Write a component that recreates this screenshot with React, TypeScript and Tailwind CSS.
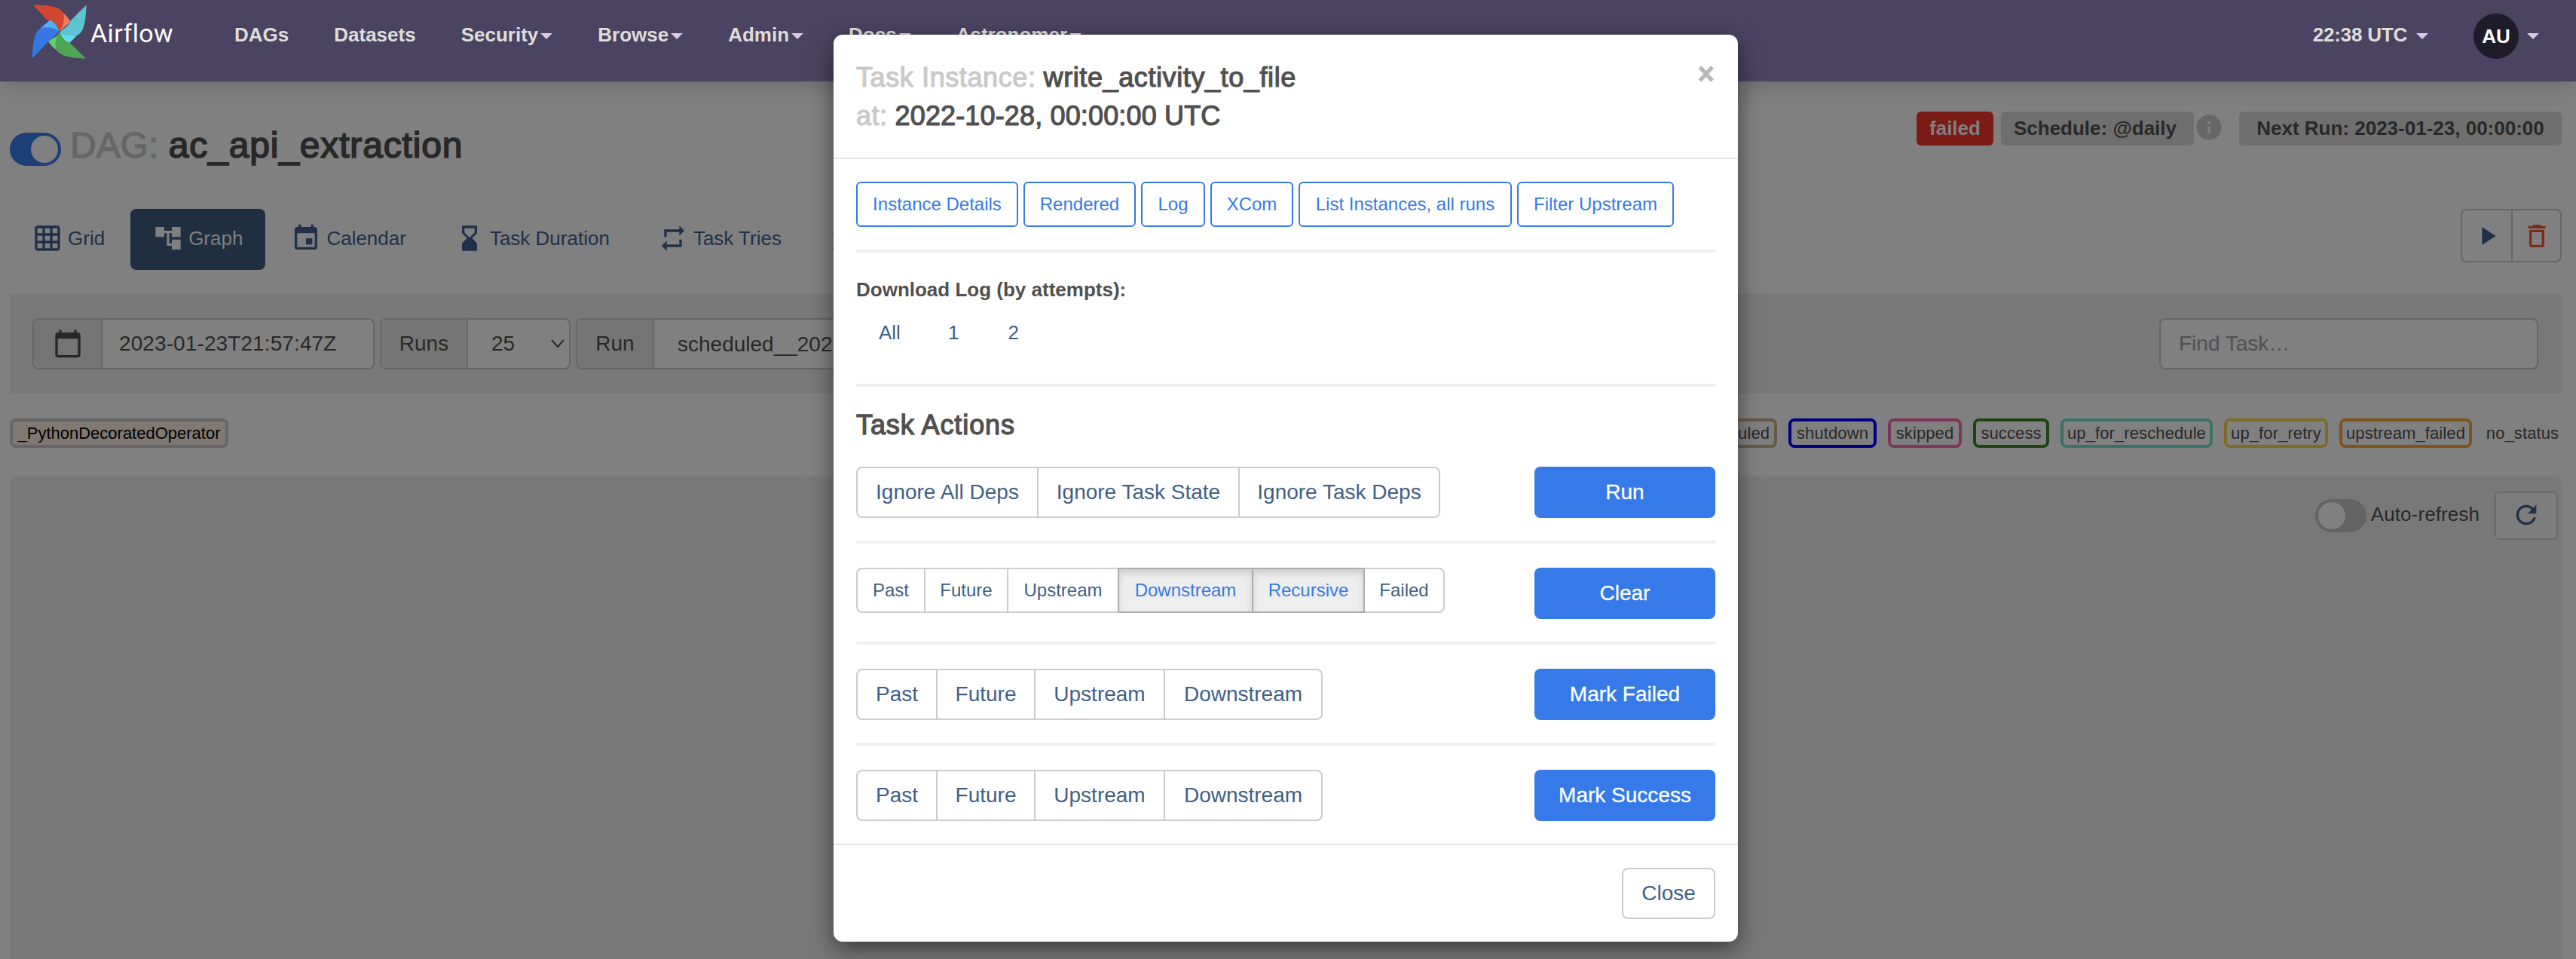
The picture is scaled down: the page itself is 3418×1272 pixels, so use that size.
import React from "react";
import {
  MdGridOn,
  MdAccountTree,
  MdEvent,
  MdHourglassBottom,
  MdRepeat,
  MdFlightLand,
  MdCalendarToday,
  MdPlayArrow,
  MdDeleteOutline,
  MdRefresh,
  MdInfo,
} from "react-icons/md";

function Pinwheel() {
  return (
    <svg className="h-[72px] w-[72px]" viewBox="43 6 72 72">
      <path d="M43 77.500C43 55 46 42 54 37.500C62 35 74 37 79 42L64 55Z" fill="#3578e5" />
      <path d="M66 27L53.500 37.500C62 35 74 37 79 42C76 35 72 27 66 27Z" fill="#4fb0fb" />
      <path d="M44 6.500C66 7 78 8 84 17.500C86 28 83 35 79 42C76 34 72 28 66 27C62 27 62 26 60 24Z" fill="#d2482f" />
      <path d="M84 17.500C88 20 91 25 94 28.500L79 42C83 35 86 28 84 17.500Z" fill="#ef7a5b" />
      <path d="M114.500 6.500C114 29 111 44 102.500 46.500C94 48 84 46 79 42C86 38 92 33 94 27Z" fill="#5bc4d0" />
      <path d="M79 42C84 46 94 48 102.500 46.500C99 50 96 54 92 57C85 55 81 48 79 42Z" fill="#62dcea" />
      <path d="M114 77.500C92 77 80 74 75 66.500C72 58 75 48 79 42C82 50 87 56 93 57Z" fill="#4fa652" />
      <path d="M79 42C75 48 72 58 75 66.500C70 63 67 59 64 55C70 50 77 49 79 42Z" fill="#5fd06a" />
      <circle cx="79" cy="42" r="1.300" fill="#4a4362" />
    </svg>
  );
}

function Caret({ className = "" }: { className?: string }) {
  return (
    <span
      className={`mt-[4px] inline-block border-x-[8px] border-t-[8px] border-x-transparent border-t-[#dccbdf] ${className}`}
    />
  );
}

function NavItem({ label, caret }: { label: string; caret?: boolean }) {
  return (
    <div className="flex items-center px-[30px]">
      <span>{label}</span>
      {caret && <Caret className="ml-[3px]" />}
    </div>
  );
}

function Tab({
  icon: Icon,
  label,
  active,
}: {
  icon: React.ComponentType<{ className?: string }>;
  label: string;
  active?: boolean;
}) {
  return (
    <div
      className={`flex h-[81px] items-center rounded-[8px] px-[30px] pb-[3px] ${
        active ? "bg-[#202e42] text-[#808080]" : "text-[#20304a]"
      }`}
    >
      <Icon className="mr-[7px] size-[40px]" />
      <span>{label}</span>
    </div>
  );
}

const states = [
  { label: "scheduled", style: "w-[121px] border-[#695a46]" },
  { label: "shutdown", style: "w-[117px] border-[#000080]" },
  { label: "skipped", style: "w-[98px] border-[#80355a]" },
  { label: "success", style: "w-[101px] border-[#1c4310]" },
  { label: "up_for_reschedule", style: "w-[202px] border-[#3b7169]" },
  { label: "up_for_retry", style: "w-[138px] border-[#7c6a25]" },
  { label: "upstream_failed", style: "w-[176px] border-[#805318]" },
  { label: "no_status", style: "w-[104px] border-transparent" },
];

function State({ label, style }: { label: string; style: string }) {
  return (
    <div
      className={`flex h-[39px] items-center justify-center rounded-[8px] border-4 text-[22px] tracking-[0.100px] whitespace-nowrap text-[#282828] ${style}`}
    >
      {label}
    </div>
  );
}

const links = [
  { label: "Instance Details", width: "w-[215px]" },
  { label: "Rendered", width: "w-[149px]" },
  { label: "Log", width: "w-[85px]" },
  { label: "XCom", width: "w-[110px]" },
  { label: "List Instances, all runs", width: "w-[283px]" },
  { label: "Filter Upstream", width: "w-[208px]" },
];

type Option = { label: string; width: string; on?: boolean };

function Options({ items, small }: { items: Option[]; small?: boolean }) {
  return (
    <div className={small ? "flex h-[60px] text-[24px]" : "flex h-[68px] text-[28px]"}>
      {items.map((o) => (
        <div
          key={o.label}
          className={`-ml-[2px] flex items-center justify-center border-2 whitespace-nowrap first:ml-0 first:rounded-l-[8px] last:rounded-r-[8px] ${o.width} ${
            o.on
              ? "relative z-10 border-[#adadad] bg-[#eeeeee] text-[#357ae8] shadow-[inset_0_6px_10px_rgba(0,0,0,0.125)]"
              : "border-[#cccccc] text-[#3f5f86]"
          }`}
        >
          {o.label}
        </div>
      ))}
    </div>
  );
}

function ActionRow({ items, action, small }: { items: Option[]; action: string; small?: boolean }) {
  return (
    <div className="flex h-[68px] items-start justify-between">
      <Options items={items} small={small} />
      <div className="flex h-[68px] w-[240px] items-center justify-center rounded-[8px] bg-[#357ae8] text-[28px] text-white [-webkit-text-stroke:0.3px]">
        {action}
      </div>
    </div>
  );
}

function Rule({ className = "" }: { className?: string }) {
  return <div className={`h-[4px] bg-[#f0f0f0] ${className}`} />;
}

const runOptions: Option[] = [
  { label: "Ignore All Deps", width: "w-[242px]" },
  { label: "Ignore Task State", width: "w-[269px]" },
  { label: "Ignore Task Deps", width: "w-[268px]" },
];

const clearOptions: Option[] = [
  { label: "Past", width: "w-[92px]" },
  { label: "Future", width: "w-[112px]" },
  { label: "Upstream", width: "w-[149px]" },
  { label: "Downstream", width: "w-[180px]", on: true },
  { label: "Recursive", width: "w-[150px]", on: true },
  { label: "Failed", width: "w-[108px]" },
];

const markOptions: Option[] = [
  { label: "Past", width: "w-[108px]" },
  { label: "Future", width: "w-[132px]" },
  { label: "Upstream", width: "w-[174px]" },
  { label: "Downstream", width: "w-[211px]" },
];

function TaskModal() {
  return (
    <div className="flex h-[1203px] w-[1200px] flex-col rounded-[12px] bg-white text-[#51504f] shadow-[0_10px_30px_rgba(0,0,0,0.5)]">
      <div className="flex h-[165px] justify-between border-b-2 border-[#e5e5e5] pt-[31px] pr-[30px] pl-[30px]">
        <div className="text-[36px] leading-[51px] [-webkit-text-stroke:1.2px]">
          <div>
            <span className="tracking-[0.600px] text-[#c9c9c9]">Task Instance:</span>{" "}
            <span className="tracking-[0.600px]">write_activity_to_file</span>
          </div>
          <div>
            <span className="tracking-[0.500px] text-[#c9c9c9]">at:</span>{" "}
            <span className="tracking-[0.150px]">2022-10-28, 00:00:00 UTC</span>
          </div>
        </div>
        <svg className="mt-[10px] h-[22px] w-[24px]" viewBox="0 0 24 22">
          <path d="M3.500 2L20 20M20 2L3.500 20" stroke="#b8b8b8" strokeWidth="5.500" />
        </svg>
      </div>

      <div className="flex flex-col px-[30px] pt-[30px]">
        <div className="flex gap-[7px] text-[24px] text-[#357ae8]">
          {links.map((l) => (
            <div
              key={l.label}
              className={`flex h-[60px] items-center justify-center rounded-[6px] border-2 border-[#357ae8] whitespace-nowrap ${l.width}`}
            >
              {l.label}
            </div>
          ))}
        </div>
        <Rule className="mt-[30px]" />
        <div className="mt-[31px] text-[26px] leading-[36px] font-bold">Download Log (by attempts):</div>
        <div className="mt-[21px] flex h-[36px] items-center text-[26px] text-[#3f5f86]">
          <span className="pl-[30px]">All</span>
          <span className="pl-[63px]">1</span>
          <span className="pl-[65px]">2</span>
        </div>
        <Rule className="mt-[50px]" />
        <div className="mt-[25px] h-[51px] text-[36px] leading-[51px] tracking-[0.900px] [-webkit-text-stroke:1.3px]">
          Task Actions
        </div>
        <div className="mt-[30px]">
          <ActionRow items={runOptions} action="Run" />
          <Rule className="mt-[30px] mb-[32px]" />
          <ActionRow items={clearOptions} action="Clear" small />
          <Rule className="mt-[30px] mb-[32px]" />
          <ActionRow items={markOptions} action="Mark Failed" />
          <Rule className="mt-[30px] mb-[32px]" />
          <ActionRow items={markOptions} action="Mark Success" />
        </div>
      </div>

      <div className="mt-[30px] flex justify-end border-t-2 border-[#e5e5e5] px-[30px] pt-[30px]">
        <div className="flex h-[68px] w-[124px] items-center justify-center rounded-[8px] border-2 border-[#cccccc] text-[28px] text-[#3f5f86]">
          Close
        </div>
      </div>
    </div>
  );
}

export default function App() {
  return (
    <div className="relative h-[1272px] w-full overflow-hidden bg-[#808080] font-['Liberation_Sans',Arial,sans-serif] text-[26px] text-[#282828]">
      <nav className="relative flex h-[108px] items-start justify-between bg-[#4a4362] pr-[49px] pl-[43px] shadow-[0_12px_24px_-4px_rgba(0,0,0,0.14)]">
        <div className="flex h-[92px] items-center font-bold text-[#dfddda]">
          <div className="mb-[9px] flex w-[238px] items-center gap-[5px]">
            <Pinwheel />
            <span className="mt-[5px] font-[Roboto] text-[34px] font-normal tracking-[0.400px] text-white">Airflow</span>
          </div>
          <NavItem label="DAGs" />
          <NavItem label="Datasets" />
          <NavItem label="Security" caret />
          <NavItem label="Browse" caret />
          <NavItem label="Admin" caret />
          <NavItem label="Docs" caret />
          <NavItem label="Astronomer" caret />
        </div>
        <div className="flex h-[92px] items-center font-bold text-[#dfddda]">
          <span className="tracking-[-0.200px]">22:38 UTC</span>
          <Caret className="ml-[12px]" />
          <div className="mt-[4px] ml-[60px] flex size-[60px] items-center justify-center rounded-full bg-[#1f1c2a] text-[26px] text-white">
            AU
          </div>
          <Caret className="ml-[11px]" />
        </div>
      </nav>

      <main className="px-[13px] pr-[19px]">
        <div className="flex h-[169px] items-start justify-between">
          <div className="flex items-center pt-[51px]">
            <div className="mt-[10px] flex h-[44px] w-[68px] items-center justify-end rounded-full bg-[#1c3f77] px-[4px]">
              <div className="size-[36px] rounded-full bg-[#808080]" />
            </div>
            <h1 className="ml-[12px] text-[48px] leading-[68px]">
              <span className="text-[#666666] [-webkit-text-stroke:1.3px]">DAG:</span>{" "}
              <span className="tracking-[0.850px] [-webkit-text-stroke:1.7px]">ac_api_extraction</span>
            </h1>
          </div>
          <div className="flex items-center pt-[40px] font-bold">
            <div className="flex h-[45px] w-[102px] items-center justify-center rounded-[6px] bg-[#7a1c15] text-[#808080]">
              failed
            </div>
            <div className="ml-[10px] flex h-[45px] w-[256px] items-center justify-center rounded-[6px] bg-[#6f6f6f] pr-[6px]">
              Schedule: @daily
            </div>
            <MdInfo className="mb-[3px] size-[40px] text-[#676767]" />
            <div className="ml-[20px] flex h-[45px] w-[428px] items-center justify-center rounded-[6px] bg-[#6f6f6f]">
              Next Run: 2023-01-23, 00:00:00
            </div>
          </div>
        </div>

        <div className="flex h-[113px] items-start justify-between">
          <div className="flex gap-[4px]">
            <Tab icon={MdGridOn} label="Grid" />
            <Tab icon={MdAccountTree} label="Graph" active />
            <Tab icon={MdEvent} label="Calendar" />
            <Tab icon={MdHourglassBottom} label="Task Duration" />
            <Tab icon={MdRepeat} label="Task Tries" />
            <div className="flex h-[81px] items-center pb-[3px] pl-[30px] text-[#20304a]">
              <MdFlightLand className="size-[40px]" />
            </div>
          </div>
          <div className="flex h-[71px] w-[134px] rounded-[8px] border-2 border-[#666666]">
            <div className="flex w-[67px] items-center justify-center border-r-2 border-[#666666] text-[#20304a]">
              <MdPlayArrow className="size-[40px]" />
            </div>
            <div className="flex flex-1 items-center justify-center text-[#7c2a1b]">
              <MdDeleteOutline className="size-[40px]" />
            </div>
          </div>
        </div>

        <div className="flex h-[132px] items-center justify-between bg-[#787878] pr-[31px] pl-[30px] text-[28px]">
          <div className="flex gap-[7px]">
            <div className="flex h-[68px] w-[454px] rounded-[8px] border-2 border-[#666666] bg-[#808080]">
              <div className="flex w-[91px] items-center justify-center rounded-l-[6px] border-r-2 border-[#666666] bg-[#757575]">
                <MdCalendarToday className="size-[40px]" />
              </div>
              <div className="flex flex-1 items-center pl-[22px] tracking-[0.100px]">2023-01-23T21:57:47Z</div>
            </div>
            <div className="flex h-[68px] w-[253px] rounded-[8px] border-2 border-[#666666] bg-[#808080]">
              <div className="flex w-[115px] items-center justify-center rounded-l-[6px] border-r-2 border-[#666666] bg-[#757575]">
                Runs
              </div>
              <div className="flex flex-1 items-center justify-between pr-[6px] pl-[31px]">
                <span>25</span>
                <svg className="h-[12px] w-[18px]" viewBox="0 0 18 12">
                  <path d="M1 1L9 10L17 1" fill="none" stroke="#282828" strokeWidth="2" />
                </svg>
              </div>
            </div>
            <div className="flex h-[68px] w-[760px] rounded-[8px] border-2 border-[#666666] bg-[#808080]">
              <div className="flex w-[102px] items-center justify-center rounded-l-[6px] border-r-2 border-[#666666] bg-[#757575]">
                Run
              </div>
              <div className="flex flex-1 items-center pt-[2px] pl-[31px]">scheduled__2022</div>
            </div>
          </div>
          <div className="flex h-[68px] w-[503px] items-center rounded-[8px] border-2 border-[#666666] bg-[#808080] pl-[24px] text-[#515151]">
            Find Task…
          </div>
        </div>

        <div className="flex h-[110px] items-start justify-between pt-[33px]">
          <div className="flex h-[39px] w-[290px] items-center justify-center rounded-[8px] border-4 border-[#666666] bg-[#7f7873] text-[22px] text-black">
            _PythonDecoratedOperator
          </div>
          <div className="flex gap-[15px]">
            {states.map((s) => (
              <State key={s.label} label={s.label} style={s.style} />
            ))}
          </div>
        </div>

        <div className="flex h-[660px] items-start justify-end rounded-[8px] bg-[#787878] pt-[20px] pr-[5px]">
          <div className="mt-[10px] flex h-[44px] w-[68px] items-center rounded-full bg-[#646464] px-[4px]">
            <div className="size-[36px] rounded-full bg-[#808080]" />
          </div>
          <span className="mt-[12px] ml-[6px] leading-[36px] tracking-[0.100px]">Auto-refresh</span>
          <div className="ml-[20px] flex h-[64px] w-[84px] items-center justify-center rounded-[6px] border-2 border-[#696969] bg-[#7d7d7d] pb-[3px] text-[#20304a]">
            <MdRefresh className="size-[40px]" />
          </div>
        </div>
      </main>

      <div className="absolute inset-0 flex items-start justify-center pt-[46px] pr-[6px]">
        <TaskModal />
      </div>
    </div>
  );
}
